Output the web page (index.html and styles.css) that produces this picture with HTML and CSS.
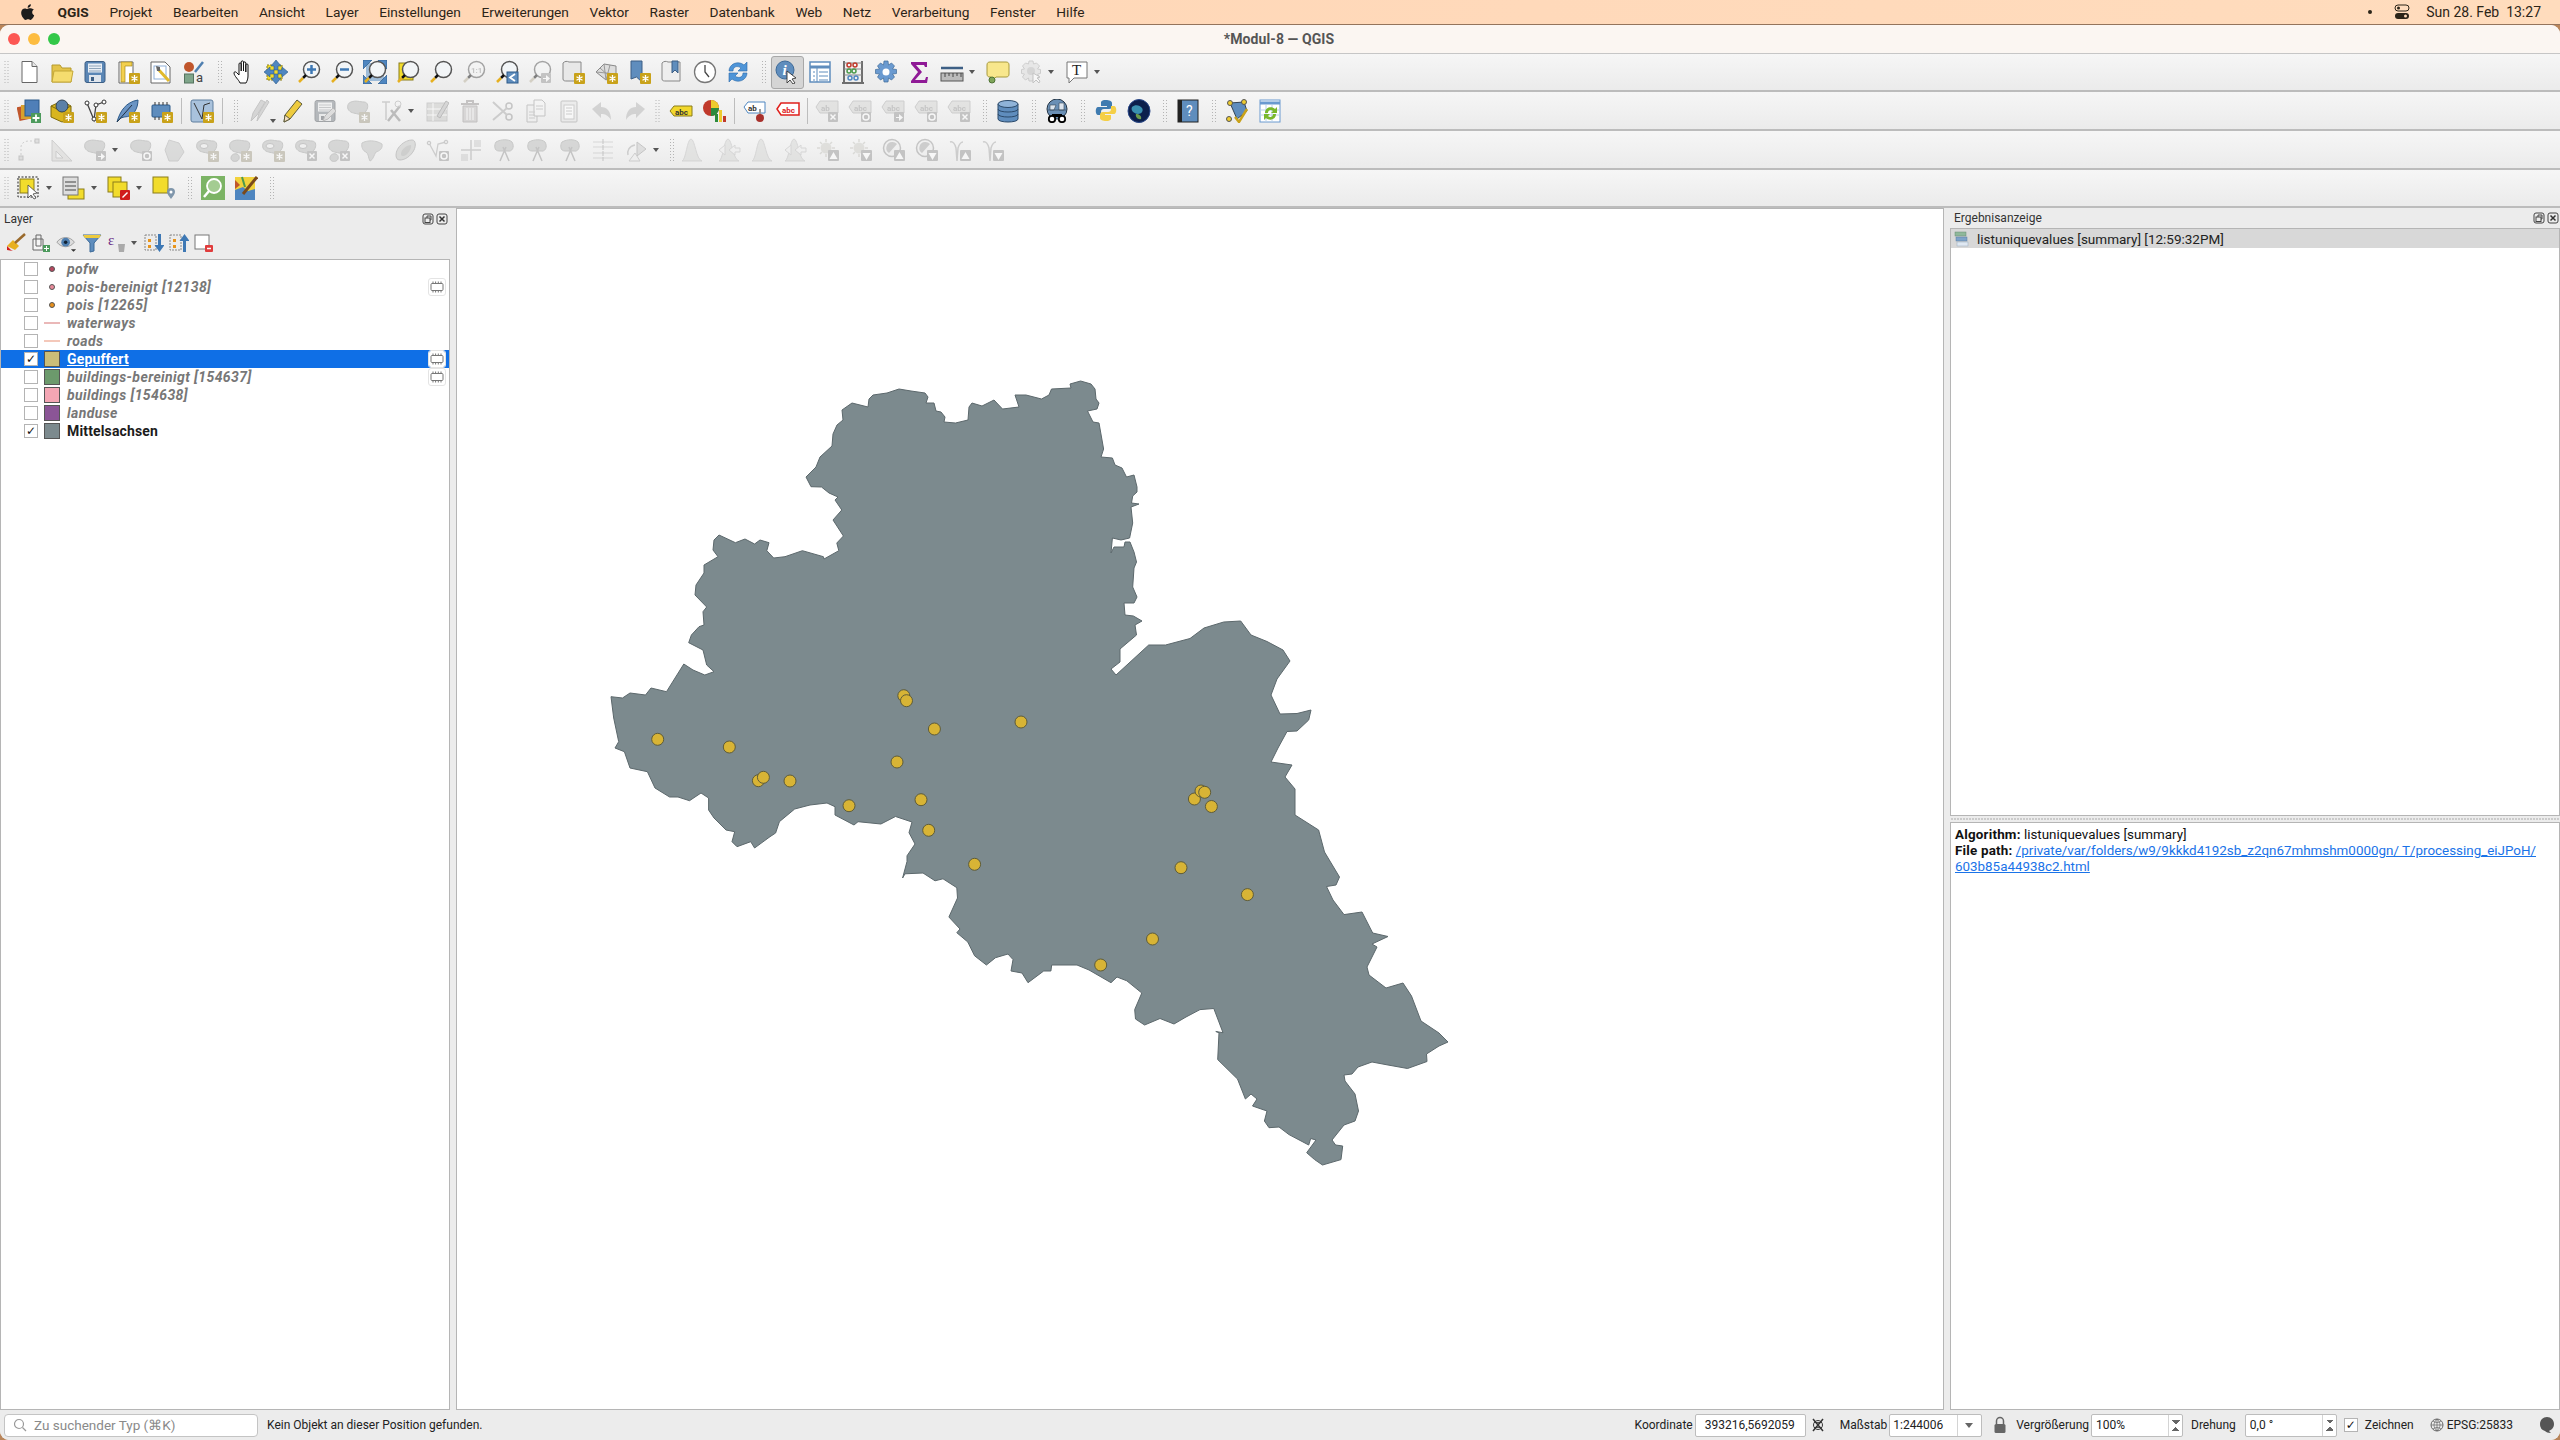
FILE: index.html
```html
<!DOCTYPE html>
<html lang="de">
<head>
  <meta charset="UTF-8" />
  <title>*Modul-8 — QGIS</title>
  <link rel="stylesheet" href="styles.css">
</head>
<body>

  <!-- shared icons -->
  <svg class="defs">
    <symbol id="star" viewBox="0 0 24 24"><rect x="13" y="13" width="11" height="11" rx="1" fill="#c9a21a"/><path d="M18.5 15v7M15.5 16.8l6 3.5M21.5 16.8l-6 3.5" stroke="#fff" stroke-width="1.3"/></symbol>
    <symbol id="xbadge" viewBox="0 0 24 24"><rect x="13" y="13" width="10" height="10" rx="1" fill="#999"/><path d="M15.5 15.5l5 5M20.5 15.5l-5 5" stroke="#fff" stroke-width="1.5"/></symbol>
    <symbol id="arrbadge" viewBox="0 0 24 24"><rect x="13" y="13" width="10" height="10" rx="1" fill="#999"/><path d="M15 18h3v-3l4 3.5-4 3.5v-3h-3z" fill="#fff"/></symbol>
    <symbol id="bluearr" viewBox="0 0 24 24"><rect x="12" y="12" width="11" height="11" fill="#5f8dbd" stroke="#2c5a8a"/><path d="M20 14l-5 3.5 5 3.5" fill="none" stroke="#fff" stroke-width="1.8"/></symbol>
    <symbol id="rotbadge" viewBox="0 0 24 24"><rect x="13" y="13" width="10" height="10" rx="1" fill="#999"/><circle cx="18" cy="18" r="3" fill="none" stroke="#fff" stroke-width="1.5"/></symbol>
    <symbol id="upbadge" viewBox="0 0 24 24"><rect x="12" y="12" width="11" height="11" rx="1" fill="#999"/><path d="M17.5 14l4 7h-8z" fill="#fff"/></symbol>
    <symbol id="downbadge" viewBox="0 0 24 24"><rect x="12" y="12" width="11" height="11" rx="1" fill="#999"/><path d="M13.5 15h8l-4 7z" fill="#fff"/></symbol>
    <symbol id="doc" viewBox="0 0 24 24"><path d="M5 1.5h10l5 5v16H5z" fill="#fff" stroke="#666"/><path d="M15 1.5v5h5" fill="#e8e8e8" stroke="#666"/></symbol>
    <symbol id="folder" viewBox="0 0 24 24"><path d="M2 5h8l2 3h9v14H2z" fill="#e4c44a" stroke="#b59a2c"/><path d="M2 22l2-11h19l-2 11z" fill="#f5dc6e" stroke="#c4a838"/></symbol>
    <symbol id="floppy" viewBox="0 0 24 24"><rect x="2" y="1.5" width="20" height="21" rx="2" fill="#5a86b5" stroke="#3d5f85"/><rect x="5" y="3.5" width="14" height="9" fill="#e8eef5"/><path d="M6 6h12M6 8.5h12M6 11h12" stroke="#8ea4ba"/><rect x="6" y="15" width="12" height="7" fill="#dfe5ec"/><rect x="8" y="17" width="3" height="4" fill="#3d5f85"/></symbol>
    <symbol id="layout" viewBox="0 0 24 24"><path d="M3 2h14v21H3z" fill="#fff" stroke="#666"/><path d="M5 2h11v4H9v16H5z" fill="#f3d04e" stroke="#a8891c" stroke-width=".7"/></symbol>
    <symbol id="wrenchdoc" viewBox="0 0 24 24"><path d="M2 2h14l5 5v16H2z" fill="#fff" stroke="#666"/><rect x="5" y="6" width="12" height="13" fill="none" stroke="#8fb0d8"/><path d="M9 9l11 12" stroke="#e0b92c" stroke-width="3"/><path d="M7 6l4 1 0 4-3 0z" fill="#666"/></symbol>
    <symbol id="style" viewBox="0 0 24 24"><circle cx="7" cy="7" r="5" fill="#c0562c"/><path d="M13 12L21 2" stroke="#4f7fb0" stroke-width="2.5"/><rect x="2.5" y="14" width="9" height="9" fill="#7fa58a" stroke="#55735f"/></symbol>
    <symbol id="hand" viewBox="0 0 24 24"><path d="M9 23c-1-3-6-7-6-10 0-1.500 1.500-1.500 2.500-.5L8 15V4c0-1.500 2.200-1.500 2.200 0v7-9c0-1.500 2.300-1.500 2.300 0v9V3c0-1.500 2.300-1.500 2.300 0v9-7c0-1.500 2.200-1.500 2.200 0v11c0 3-1 5-2 7z" fill="#fff" stroke="#111"/></symbol>
    <symbol id="pan" viewBox="0 0 24 24"><rect x="3" y="5" width="15" height="15" fill="#f2dc2c" stroke="#8a7d1a" stroke-dasharray="2 1"/><path d="M12 0l5 6h-3v4h-4V6H7zM12 24l5-6h-3v-4h-4v4H7zM0 12l6-5v3h4v4H6v3zM24 12l-6-5v3h-4v4h4v3z" fill="#4f86c0" stroke="#2c5a8a" stroke-width=".6"/></symbol>
    <symbol id="mag" viewBox="0 0 24 24"><circle cx="14.5" cy="9.5" r="8" fill="#f2f5f7" stroke="#555" stroke-width="1.5"/><path d="M9 15l-3 3" stroke="#111" stroke-width="2.5"/><path d="M6 18l-4 4" stroke="#e6b020" stroke-width="2.5"/></symbol>
    <symbol id="plus" viewBox="0 0 24 24"><path d="M14.5 5v9M10 9.500h9" stroke="#3e78b4" stroke-width="2.5"/></symbol>
    <symbol id="minus" viewBox="0 0 24 24"><path d="M10 9.500h9" stroke="#3e78b4" stroke-width="2.5"/></symbol>
    <symbol id="fullarrows" viewBox="0 0 24 24"><rect x="3" y="3" width="18" height="18" fill="#9dbbd8"/><path d="M0 0h9L0 9zM24 0h-9l9 9zM24 24h-9l9-9zM0 24h9l-9-9z" fill="#4f86c0" stroke="#2c5a8a" stroke-width=".7"/></symbol>
    <symbol id="yellowsq" viewBox="0 0 24 24"><rect x="3" y="3" width="14" height="17" fill="#f2dc2c" stroke="#8a7d1a"/></symbol>
    <symbol id="mapdoc" viewBox="0 0 24 24"><path d="M2 3c2-2 4-2 6-1h12v19H6c-2 0-4 0-4-2z" fill="#e8e8e8" stroke="#888"/></symbol>
    <symbol id="grid3d" viewBox="0 0 24 24"><path d="M2 12l8-8 12 2 0 8-10 6z" fill="#ddd" stroke="#888"/><path d="M6 8l10 9M10 4l2 16M16 5l-4 15M2 12l20 2" stroke="#999" fill="none"/></symbol>
    <symbol id="bookmark" viewBox="0 0 24 24"><path d="M4 1h11v21l-5.500-5L4 19z" fill="#5f8dbd" stroke="#3d5f85"/></symbol>
    <symbol id="bookmarks" viewBox="0 0 24 24"><path d="M2 3c2-2 4-2 6-1h12v19H6c-2 0-4 0-4-2z" fill="#eee" stroke="#888"/><path d="M12 1h6v12l-3-3-3 3z" fill="#5f8dbd" stroke="#3d5f85"/></symbol>
    <symbol id="clock" viewBox="0 0 24 24"><circle cx="12" cy="12" r="10.5" fill="#fff" stroke="#777" stroke-width="1.3"/><path d="M12 5v7l4 5" fill="none" stroke="#444" stroke-width="1.3"/></symbol>
    <symbol id="refresh" viewBox="0 0 24 24"><path d="M3 11C3 4 12 0 18 5l3-3v9h-9l3-3C11 5 7 7 7 11zM21 13c0 7-9 11-15 6l-3 3v-9h9l-3 3c4 3 8 1 8-3z" fill="#4f95d8" stroke="#2c6aa8" stroke-width=".6"/></symbol>
    <symbol id="identify" viewBox="0 0 24 24"><circle cx="10" cy="10" r="9" fill="#5f8dbd" stroke="#3d6a98"/></symbol>
    <symbol id="cursor" viewBox="0 0 24 24"><path d="M12 11v12l3-3 3 4 2-1-3-4 4-1z" fill="#fff" stroke="#333" stroke-width=".9"/></symbol>
    <symbol id="table" viewBox="0 0 24 24"><rect x="2" y="2" width="20" height="20" fill="#fff" stroke="#5f8dbd" stroke-width="1.5"/><path d="M2 7h20" stroke="#5f8dbd" stroke-width="3"/><path d="M9 8v14M5 12h2M5 16h2M5 20h2M11 12h9M11 16h9M11 20h9" stroke="#5f8dbd"/></symbol>
    <symbol id="abacus" viewBox="0 0 24 24"><path d="M3 1v21M21 1v21M1 23h22" stroke="#444" stroke-width="1.5"/><path d="M3 3h18M3 9h18M3 15h18" stroke="#888"/><g fill="none" stroke-width="1.5"><circle cx="8" cy="5" r="2" stroke="#c0392b"/><circle cx="14" cy="5" r="2" stroke="#c0392b"/><circle cx="8" cy="11" r="2" stroke="#4c9a4c"/><circle cx="13" cy="11" r="2" stroke="#4c9a4c"/><circle cx="9" cy="18" r="2" stroke="#4f86c0"/><circle cx="15" cy="18" r="2" stroke="#4f86c0"/></g></symbol>
    <symbol id="gear" viewBox="0 0 24 24"><path d="M10 1h4l.5 4 3-2 3 3-2 3 4 .5v4l-4 .5 2 3-3 3-3-2-.5 4h-4l-.5-4-3 2-3-3 2-3-4-.5v-4l4-.5-2-3 3-3 3 2z" fill="#6a9ad0" stroke="#3d6a98" stroke-width=".7"/><circle cx="12" cy="12" r="3.5" fill="#fff"/></symbol>
    <symbol id="sigma" viewBox="0 0 24 24"><path d="M4 2h16v5h-2l-1-2H9l6 7-7 8h10l1-3h2l-1 6H4v-2l7-9-7-8z" fill="#8f1a96"/></symbol>
    <symbol id="ruler" viewBox="0 0 24 24"><path d="M1 8h22" stroke="#3d5f85" stroke-width="2.5"/><rect x="1" y="13" width="22" height="8" fill="#bbb" stroke="#555"/><path d="M5 13v4M9 13v3M13 13v4M17 13v3M21 13v4" stroke="#444"/></symbol>
    <symbol id="balloon" viewBox="0 0 24 24"><path d="M4 2h16c2 0 3 1 3 3v9c0 2-1 3-3 3H10l-5 5 0-5H4c-2 0-3-1-3-3V5c0-2 1-3 3-3z" fill="#f8e78c" stroke="#a89a3c"/><circle cx="6" cy="20" r="3" fill="#7fa55a" stroke="#4f7335"/></symbol>
    <symbol id="action" viewBox="0 0 24 24"><path d="M10 1h4l.5 3 3-1 3 3-2 3 3 .5v4l-3 .5 2 3-3 3-3-2-.5 3h-4l-.5-3-3 2-3-3 2-3-3-.5v-4l3-.5-2-3 3-3 3 1z" fill="#ddd" stroke="#aaa"/><circle cx="12" cy="11" r="4" fill="#bbb"/><path d="M14 13v10l3-3 3 3 1-2-3-3 3-1z" fill="#fff" stroke="#999"/></symbol>
    <symbol id="tbox" viewBox="0 0 24 24"><path d="M2 2h20v16H9l-5 5v-5H2z" fill="#fff" stroke="#777"/></symbol>
    <symbol id="addlayer" viewBox="0 0 24 24"><rect x="1" y="7" width="12" height="14" fill="#c0562c" transform="rotate(-12 7 14)"/><rect x="4" y="6" width="13" height="14" fill="#d9a02c"/><rect x="8" y="1" width="14" height="16" fill="#4f7fb8" stroke="#2c5a8a"/><rect x="14" y="14" width="10" height="10" fill="#4c9a5c"/><path d="M19 15.5v7M15.5 19h7" stroke="#fff" stroke-width="1.8"/></symbol>
    <symbol id="gpkg" viewBox="0 0 24 24"><path d="M1 7l11-5 9 5v13l-9 3-11-5z" fill="#d9b51e" stroke="#7d6a0c"/><path d="M1 7l10 5 10-5" fill="none" stroke="#7d6a0c"/><circle cx="12" cy="7" r="6" fill="#5b80a8" stroke="#345"/></symbol>
    <symbol id="vnode" viewBox="0 0 24 24"><path d="M4 4l7 17L13 6 21 3" fill="none" stroke="#444" stroke-width="1.3"/><g fill="#fff" stroke="#333"><circle cx="4" cy="4" r="2"/><circle cx="11" cy="20" r="2"/><circle cx="13" cy="6" r="2"/><circle cx="21" cy="3" r="2"/></g></symbol>
    <symbol id="feather" viewBox="0 0 24 24"><path d="M1 23C4 12 10 3 22 1c0 8-4 17-14 17l-3 1z" fill="#6a94c4" stroke="#2c5a8a"/><path d="M1 23L16 6" stroke="#234"/></symbol>
    <symbol id="chip" viewBox="0 0 24 24"><rect x="3" y="6" width="18" height="12" rx="1" fill="#5f8dbd" stroke="#2c5a8a"/><path d="M6 3v3M10 3v3M14 3v3M18 3v3M6 18v3M10 18v3M14 18v3M18 18v3" stroke="#333"/></symbol>
    <symbol id="vbox" viewBox="0 0 24 24"><rect x="1" y="1" width="22" height="22" rx="2" fill="#a9c2dc" stroke="#5f7f9f"/><path d="M4 4l8 16 2-14 6-2" fill="none" stroke="#333"/></symbol>
    <symbol id="pencils" viewBox="0 0 24 24"><path d="M4 22l2-8 8-13 4 2-8 13zM10 22l2-8 8-13 2 2-8 13z" fill="#bbb" stroke="#999"/></symbol>
    <symbol id="pencil" viewBox="0 0 24 24"><path d="M4 23l1-7L17 1l5 4L10 20z" fill="#eecb3e" stroke="#5d5a3a"/><path d="M4 23l1-7 5 4z" fill="#f3dfc0" stroke="#5d5a3a"/></symbol>
    <symbol id="floppyedit" viewBox="0 0 24 24"><use href="#floppy"/><path d="M10 22l2-5 8-8 3 3-8 8z" fill="#ccc" stroke="#888"/></symbol>
    <symbol id="blob" viewBox="0 0 24 24"><path d="M5 3c5-2 9 0 13 0s5 5 2 9c-2 3-4 4-8 3-4-1-8-1-10-5-1-3 0-6 3-7z" fill="#b8bdb8" stroke="#9a9f9a"/></symbol>
    <symbol id="tools" viewBox="0 0 24 24"><path d="M3 3h8M7 3v18" stroke="#aaa" stroke-width="1.5"/><path d="M9 22l12-15M21 22L12 11" stroke="#8a8a8a" stroke-width="2.5"/><circle cx="19" cy="5" r="3" fill="none" stroke="#aaa"/></symbol>
    <symbol id="tabedit" viewBox="0 0 24 24"><rect x="2" y="4" width="20" height="18" fill="#ccc8b8" stroke="#aaa"/><path d="M2 10h20M2 16h20M8 4v18" stroke="#fff"/><path d="M12 17l9-15 3 2-9 15z" fill="#bbb" stroke="#888"/></symbol>
    <symbol id="trash" viewBox="0 0 24 24"><path d="M3 5h18M9 5V2h6v3" stroke="#a89090" stroke-width="2" fill="none"/><path d="M5 7h14v16H5z" fill="#cbb" stroke="#a89090"/><path d="M9 9v12M12 9v12M15 9v12" stroke="#fff"/></symbol>
    <symbol id="scissors" viewBox="0 0 24 24"><circle cx="18" cy="7" r="3" fill="none" stroke="#999" stroke-width="1.5"/><circle cx="18" cy="18" r="3" fill="none" stroke="#999" stroke-width="1.5"/><path d="M2 3l14 13M2 21L16 9" stroke="#aaa" stroke-width="2"/></symbol>
    <symbol id="copy" viewBox="0 0 24 24"><path d="M3 6h10v17H3z" fill="#eee" stroke="#999"/><path d="M10 1h8l3 3v13H10z" fill="#f5f5f5" stroke="#999"/><path d="M12 7h7M12 10h7M5 13h6M5 16h6M5 19h6" stroke="#aaa"/></symbol>
    <symbol id="paste" viewBox="0 0 24 24"><rect x="4" y="2" width="16" height="21" rx="1" fill="#e6e6e6" stroke="#999"/><rect x="7" y="6" width="10" height="14" fill="#fff" stroke="#aaa"/><path d="M9 9h6M9 12h6M9 15h6" stroke="#aaa"/></symbol>
    <symbol id="undo" viewBox="0 0 24 24"><path d="M2 10l9-7v5c6 0 10 4 10 13-3-5-6-6-10-6v4z" fill="#b5b5b5"/></symbol>
    <symbol id="redo" viewBox="0 0 24 24"><path d="M22 10l-9-7v5C7 8 3 12 3 21c3-5 6-6 10-6v4z" fill="#b5b5b5"/></symbol>
    <symbol id="abc" viewBox="0 0 24 24"><path d="M1 12l4-5h18v10H5z" fill="#f2d82c" stroke="#8a7d1a"/></symbol>
    <symbol id="pie" viewBox="0 0 24 24"><circle cx="9" cy="9" r="8" fill="#c0392b"/><path d="M9 9V1a8 8 0 0 1 8 8z" fill="#eecb2e"/><path d="M9 9h8a8 8 0 0 1-8 8z" fill="#2c8a3c"/><rect x="13" y="15" width="3" height="8" fill="#2c8a3c"/><rect x="17" y="11" width="3" height="12" fill="#eecb2e"/><rect x="21" y="17" width="3" height="6" fill="#c0392b"/></symbol>
    <symbol id="abpin" viewBox="0 0 24 24"><path d="M1 8l4-5h17v11H5z" fill="#fff" stroke="#4f86c0"/></symbol>
    <symbol id="pin" viewBox="0 0 24 24"><path d="M17 10v6" stroke="#999" stroke-width="2"/><circle cx="17" cy="19" r="4" fill="#a8312c"/></symbol>
    <symbol id="abcred" viewBox="0 0 24 24"><path d="M1 10l4-6h18v12H5z" fill="#fff" stroke="#e0201c" stroke-width="1.5"/></symbol>
    <symbol id="abcgray" viewBox="0 0 24 24"><path d="M1 8l4-6h18v12H5z" fill="#d8d4c6" stroke="#aaa"/></symbol>
    <symbol id="db" viewBox="0 0 24 24"><path d="M2 5v15c0 4 20 4 20 0V5" fill="#5f8dbd" stroke="#2c4a6a"/><ellipse cx="12" cy="5" rx="10" ry="3.5" fill="#8fb3d8" stroke="#2c4a6a"/><path d="M2 10c0 4 20 4 20 0M2 15c0 4 20 4 20 0" fill="none" stroke="#2c4a6a"/></symbol>
    <symbol id="globebin" viewBox="0 0 24 24"><circle cx="12" cy="10" r="10" fill="#6a8fb5" stroke="#234"/><path d="M5 6h6l-2 5-4 0zM14 4h5v7h-5zM3 11h18" fill="#dde5ee" stroke="#345" stroke-width=".6"/><path d="M7 15h10v3H7z"/><circle cx="7" cy="20" r="3.2" fill="#fff" stroke="#000" stroke-width="1.8"/><circle cx="17" cy="20" r="3.2" fill="#fff" stroke="#000" stroke-width="1.8"/></symbol>
    <symbol id="python" viewBox="0 0 24 24"><path d="M12 1c-5 0-5 2-5 3v3h6v1H4c-3 0-3 8 0 8h3v-3c0-2 1-3 3-3h5c2 0 3-1 3-3V4c0-2-3-3-6-3z" fill="#3f7bb0"/><path d="M12 22c5 0 5-2 5-3v-3h-6v-1h9c3 0 3-8 0-8h-3v3c0 2-1 3-3 3H9c-2 0-3 1-3 3v3c0 2 3 3 6 3z" fill="#f5cf46"/></symbol>
    <symbol id="earth" viewBox="0 0 24 24"><ellipse cx="12" cy="12" rx="11" ry="11.5" fill="#0c1f4c" stroke="#2c4a8a"/><path d="M5 8c3-3 8-2 10 1s-1 6-4 6-8-3-6-7z" fill="#3a8fb0"/><path d="M9 15c3 0 6 2 5 5-3 1-6-2-5-5z" fill="#6a9a4c"/></symbol>
    <symbol id="helpbook" viewBox="0 0 24 24"><rect x="2" y="1" width="20" height="22" fill="#5f8dbd" stroke="#222"/><rect x="2" y="1" width="4" height="22" fill="#222"/></symbol>
    <symbol id="topo" viewBox="0 0 24 24"><path d="M5 4l14-1 3 9-10 8z" fill="#5f8dbd" stroke="#345"/><g fill="#eecb2e" stroke="#555"><circle cx="5" cy="4" r="2.5"/><circle cx="19" cy="3" r="2.5"/><circle cx="4" cy="20" r="2.5"/></g><path d="M10 18l4 5 8-13" fill="none" stroke="#c9a21a" stroke-width="2.5"/></symbol>
    <symbol id="tablerefresh" viewBox="0 0 24 24"><rect x="2" y="1" width="20" height="22" fill="#fff" stroke="#6a9ad0"/><path d="M2 4h20" stroke="#6a9ad0" stroke-width="3"/><path d="M8 6v17M14 6v17M2 11h20M2 16h20" stroke="#b8d0e8"/><path d="M7 14c0-6 7-7 10-4l2-2v6h-6l2-2c-2-2-5-1-5 2zM18 15c0 6-7 7-10 4l-2 2v-6h6l-2 2c2 2 5 1 5-2z" fill="#7ab82c"/></symbol>
    <symbol id="dotted" viewBox="0 0 24 24"><path d="M4 21V9c0-4 4-6 8-6h9" fill="none" stroke="#aaa" stroke-dasharray="2 2"/><rect x="2" y="18" width="4" height="4" fill="#ccc" stroke="#999"/><rect x="18" y="1" width="4" height="4" fill="#ccc" stroke="#999"/></symbol>
    <symbol id="triruler" viewBox="0 0 24 24"><path d="M2 2l20 21H2z" fill="#ddd6c8" stroke="#aaa"/><path d="M6 13l7 7H6z" fill="#eee" stroke="#aaa"/></symbol>
    <symbol id="ring" viewBox="0 0 24 24"><use href="#blob"/><ellipse cx="9" cy="8" rx="4" ry="2.5" fill="#eee" stroke="#999"/></symbol>
    <symbol id="two" viewBox="0 0 24 24"><use href="#blob"/><path d="M3 20c0-3 3-5 6-4s3 6 0 7-6 0-6-3z" fill="#b8bdb8" stroke="#9a9f9a"/></symbol>
    <symbol id="hex" viewBox="0 0 24 24"><path d="M7 2l10 3 5 9-6 9H7L3 12z" fill="#c4c8c4" stroke="#aaa"/></symbol>
    <symbol id="reshape" viewBox="0 0 24 24"><path d="M2 5c5-3 14-3 20 1 1 5-3 7-6 8-2 3-3 8-6 9-2-3-1-7-4-9-3-1-5-5-4-9z" fill="#bdc2bb" stroke="#a0a5a0"/></symbol>
    <symbol id="offset" viewBox="0 0 24 24"><path d="M3 17C3 9 12 2 19 2c4 0 4 6 2 10-3 6-9 10-14 10-3 0-4-2-4-5z" fill="#c4c8bc" stroke="#999"/><path d="M8 16c0-5 6-9 10-9 1 3-3 10-7 11-2 0-3 0-3-2z" fill="#aab0a4"/></symbol>
    <symbol id="noderot" viewBox="0 0 24 24"><path d="M3 5l7 13L12 6 20 4" fill="none" stroke="#aaa" stroke-width="1.3"/><circle cx="3" cy="5" r="1.8" fill="#ddd" stroke="#999"/><circle cx="20" cy="4" r="1.8" fill="#ddd" stroke="#999"/></symbol>
    <symbol id="splitx" viewBox="0 0 24 24"><path d="M2 12h20M12 2v20" stroke="#aaa" stroke-width="1.5"/><rect x="15" y="2" width="7" height="7" fill="#ccc"/><rect x="2" y="16" width="7" height="7" fill="#ccc"/></symbol>
    <symbol id="scblob" viewBox="0 0 24 24"><path d="M4 4c5-3 13-3 16 0 3 5 0 10-4 9-3 0-6 0-9 0-5 0-5-6-3-9z" fill="#b8bdb8" stroke="#9a9f9a"/><path d="M8 23l6-14M17 23L11 9" stroke="#999" stroke-width="1.5"/></symbol>
    <symbol id="lines" viewBox="0 0 24 24"><path d="M2 4h20M2 9h20M2 15h20M2 20h20" stroke="#bbb"/><path d="M12 1v5M12 7v5M12 13v5M12 19v4" stroke="#999"/></symbol>
    <symbol id="triarrow" viewBox="0 0 24 24"><path d="M13 4l9 7-9 7z" fill="#ccc" stroke="#999"/><path d="M11 7c-6 1-8 6-7 10" fill="none" stroke="#aaa" stroke-width="1.5"/><path d="M5 23l6-8 5 8z" fill="#eee" stroke="#aaa"/></symbol>
    <symbol id="hist" viewBox="0 0 24 24"><path d="M2 23C6 22 7 1 11 1s5 21 11 22z" fill="#d4d8cc" stroke="#bbb"/></symbol>
    <symbol id="histarrow" viewBox="0 0 24 24"><use href="#hist"/><path d="M12 12l6-5v3h5v4h-5v3zM2 12l6-5v10z" fill="#eee" stroke="#bbb"/></symbol>
    <symbol id="sun" viewBox="0 0 24 24"><circle cx="10" cy="10" r="5.5" fill="#d2cfa8"/><path d="M10 1v3M10 16v3M1 10h3M16 10h3M4 4l2 2M14 14l2 2M16 4l-2 2M4 16l2-2" stroke="#c8c6a0" stroke-width="1.5"/></symbol>
    <symbol id="contrast" viewBox="0 0 24 24"><circle cx="10" cy="10" r="8.5" fill="#eee" stroke="#999" stroke-width="1.5"/><path d="M10 4a6 6 0 0 0-3 11l8-9a6 6 0 0 0-5-2z" fill="#aaa"/></symbol>
    <symbol id="gamma" viewBox="0 0 24 24"><path d="M2 4c3-1 5 2 6 6l1 13 1-13c1-3 2-6 5-6" fill="none" stroke="#aaa" stroke-width="1.5"/></symbol>
    <symbol id="selrect" viewBox="0 0 24 24"><rect x="1" y="1" width="20" height="20" fill="none" stroke="#222" stroke-dasharray="2 1.5"/><rect x="3" y="3" width="14" height="14" fill="#f2dc2c" stroke="#8a7d1a"/><path d="M11 9v13l3-3 3 4 2-1-3-4 4-1z" fill="#fff" stroke="#444" stroke-width=".8"/></symbol>
    <symbol id="seltable" viewBox="0 0 24 24"><rect x="6" y="13" width="16" height="10" fill="#f2dc2c" stroke="#8a7d1a"/><rect x="1" y="1" width="15" height="18" fill="#ddd" stroke="#777"/><path d="M3 6h11M3 10h11M3 14h11" stroke="#777" stroke-width="1.5"/></symbol>
    <symbol id="desel" viewBox="0 0 24 24"><rect x="1" y="1" width="13" height="15" fill="#f2dc2c" stroke="#8a7d1a"/><rect x="6" y="6" width="14" height="15" fill="#f2dc2c" stroke="#8a7d1a"/><rect x="13" y="14" width="10" height="10" rx="1" fill="#d01c1c"/><path d="M15.5 21.5l5-5" stroke="#fff" stroke-width="1.5"/></symbol>
    <symbol id="selloc" viewBox="0 0 24 24"><rect x="1" y="1" width="15" height="16" fill="#f2dc2c" stroke="#8a7d1a"/><path d="M19 23c-2-3-4-5-4-7a4 4 0 0 1 8 0c0 2-2 4-4 7z" fill="#7f96ab"/><circle cx="19" cy="16" r="1.5" fill="#fff"/></symbol>
    <symbol id="greenmag" viewBox="0 0 24 24"><rect width="24" height="24" fill="#7cb465"/><circle cx="13" cy="10" r="7" fill="#a4cc92" stroke="#fff" stroke-width="1.8"/><path d="M8 15l-5 6" stroke="#fff" stroke-width="2.5"/></symbol>
    <symbol id="mapedit" viewBox="0 0 24 24"><rect x="1" y="1" width="20" height="23" fill="#f2d23c"/><path d="M1 14l8-3 5 4 7-2v11H1z" fill="#4f86c0"/><path d="M1 4l5 5-5 4z" fill="#c0562c"/><path d="M8 1l3 10" stroke="#4c9a4c" stroke-width="2"/><path d="M9 18L23 1" stroke="#7a4a1c" stroke-width="3"/></symbol>
    <symbol id="float" viewBox="0 0 12 12"><rect x="1" y="1" width="10" height="10" rx="2" fill="none" stroke="#444"/><rect x="3" y="5" width="5" height="4.5" fill="none" stroke="#444"/><path d="M5 5V3h4v4H8" fill="none" stroke="#444"/></symbol>
    <symbol id="close" viewBox="0 0 12 12"><rect x="1" y="1" width="10" height="10" rx="2" fill="none" stroke="#444"/><path d="M3.5 3.500l5 5M8.500 3.500l-5 5" stroke="#333" stroke-width="1.5"/></symbol>
    <symbol id="memchip" viewBox="0 0 16 16"><rect x="2" y="4.500" width="12" height="7" rx="1" fill="#fff" stroke="#777"/><path d="M4 2.500v2M6.600 2.500v2M9.300 2.500v2M12 2.500v2M4 11.500v2M6.600 11.500v2M9.300 11.500v2M12 11.500v2" stroke="#777"/></symbol>
  </svg>

  <!-- macOS menu -->
  <nav class="menubar">
    <svg class="apple" viewBox="0 0 16 18"><path d="M11.300 0c.1 1.200-.4 2.200-1 2.900-.7.800-1.700 1.300-2.700 1.200-.1-1.100.4-2.200 1-2.900C9.300.5 10.400 0 11.300 0zM14.800 6.100c-1.500.9-2 2-2 3.200 0 1.500.8 2.700 2.300 3.300-.4 1.300-1 2.500-1.800 3.600-.7 1-1.400 1.800-2.500 1.800s-1.400-.7-2.700-.7c-1.300 0-1.700.7-2.700.7-1.100 0-1.900-.9-2.600-2C1 14.300.2 12 .2 9.900c0-3.300 2.100-5 4.200-5 1.100 0 2 .7 2.700.7.700 0 1.700-.8 3-.8 1.100 0 3.200.4 4.700 1.300z" fill="#1d1d1d"/></svg>
    <span class="menu-item menu-app">QGIS</span>
    <span class="menu-item">Projekt</span>
    <span class="menu-item">Bearbeiten</span>
    <span class="menu-item">Ansicht</span>
    <span class="menu-item">Layer</span>
    <span class="menu-item">Einstellungen</span>
    <span class="menu-item">Erweiterungen</span>
    <span class="menu-item">Vektor</span>
    <span class="menu-item">Raster</span>
    <span class="menu-item">Datenbank</span>
    <span class="menu-item">Web</span>
    <span class="menu-item">Netz</span>
    <span class="menu-item">Verarbeitung</span>
    <span class="menu-item">Fenster</span>
    <span class="menu-item">Hilfe</span>
    <div class="menu-right">
      <span class="menu-dot"></span>
      <svg class="switches" viewBox="0 0 16 16"><rect x="1" y="1" width="14" height="6" rx="3" fill="none" stroke="#2b2418"/><circle cx="4.5" cy="4" r="1.5" fill="#2b2418"/><rect x="1" y="9" width="14" height="6" rx="3" fill="#2b2418"/><circle cx="11.5" cy="12" r="1.5" fill="#ffd9b9"/></svg>
      <span class="menu-clock">Sun 28. Feb&nbsp; 13:27</span>
    </div>
  </nav>

  <div class="window">
    <header class="titlebar">
      <div class="lights">
        <span class="light light-red"></span>
        <span class="light light-yellow"></span>
        <span class="light light-green"></span>
      </div>
      <span class="title">*Modul-8 — QGIS</span>
    </header>

    <!-- toolbars -->
    <div class="tbar tbar-short">
      <i class="grip grip-first"></i>
      <span class="tb"><svg class="ic"><use href="#doc"/></svg></span>
      <span class="tb"><svg class="ic"><use href="#folder"/></svg></span>
      <span class="tb"><svg class="ic"><use href="#floppy"/></svg></span>
      <span class="tb"><svg class="ic"><use href="#layout"/><use href="#star"/></svg></span>
      <span class="tb"><svg class="ic"><use href="#wrenchdoc"/></svg></span>
      <span class="tb"><svg class="ic" viewBox="0 0 24 24"><use href="#style"/><text x="14" y="22" class="ic-txt">a</text></svg></span>
      <i class="grip"></i>
      <span class="tb"><svg class="ic"><use href="#hand"/></svg></span>
      <span class="tb"><svg class="ic"><use href="#pan"/></svg></span>
      <span class="tb"><svg class="ic"><use href="#mag"/><use href="#plus"/></svg></span>
      <span class="tb"><svg class="ic"><use href="#mag"/><use href="#minus"/></svg></span>
      <span class="tb"><svg class="ic"><use href="#fullarrows"/><use href="#mag"/></svg></span>
      <span class="tb"><svg class="ic"><use href="#yellowsq"/><use href="#mag"/></svg></span>
      <span class="tb"><svg class="ic"><use href="#mag"/></svg></span>
      <span class="tb off"><svg class="ic" viewBox="0 0 24 24"><use href="#mag"/><text x="9" y="13" class="ic-abc ic-gray">1:1</text></svg></span>
      <span class="tb"><svg class="ic"><use href="#mag"/><use href="#bluearr"/></svg></span>
      <span class="tb off"><svg class="ic"><use href="#mag"/><use href="#arrbadge"/></svg></span>
      <span class="tb"><svg class="ic"><use href="#mapdoc"/><use href="#star"/></svg></span>
      <span class="tb"><svg class="ic"><use href="#grid3d"/><use href="#star"/></svg></span>
      <span class="tb"><svg class="ic"><use href="#bookmark"/><use href="#star"/></svg></span>
      <span class="tb"><svg class="ic"><use href="#bookmarks"/></svg></span>
      <span class="tb"><svg class="ic"><use href="#clock"/></svg></span>
      <span class="tb"><svg class="ic"><use href="#refresh"/></svg></span>
      <i class="grip"></i>
      <span class="tb tb-active"><svg class="ic" viewBox="0 0 24 24"><use href="#identify"/><text x="7.5" y="15" class="ic-i">i</text><use href="#cursor"/></svg></span>
      <span class="tb"><svg class="ic"><use href="#table"/></svg></span>
      <span class="tb"><svg class="ic"><use href="#abacus"/></svg></span>
      <span class="tb"><svg class="ic"><use href="#gear"/></svg></span>
      <span class="tb"><svg class="ic"><use href="#sigma"/></svg></span>
      <span class="tb"><svg class="ic"><use href="#ruler"/></svg></span><i class="drop"></i>
      <span class="tb"><svg class="ic"><use href="#balloon"/></svg></span>
      <span class="tb off"><svg class="ic"><use href="#action"/></svg></span><i class="drop"></i>
      <span class="tb"><svg class="ic" viewBox="0 0 24 24"><use href="#tbox"/><text x="7" y="15" class="ic-t">T</text></svg></span><i class="drop"></i>
    </div>

    <div class="tbar">
      <i class="grip grip-first"></i>
      <span class="tb"><svg class="ic"><use href="#addlayer"/></svg></span>
      <span class="tb"><svg class="ic"><use href="#gpkg"/><use href="#star"/></svg></span>
      <span class="tb"><svg class="ic"><use href="#vnode"/><use href="#star"/></svg></span>
      <span class="tb"><svg class="ic"><use href="#feather"/><use href="#star"/></svg></span>
      <span class="tb"><svg class="ic"><use href="#chip"/><use href="#star"/></svg></span>
      <i class="sep"></i>
      <span class="tb"><svg class="ic"><use href="#vbox"/><use href="#star"/></svg></span>
      <i class="sep"></i>
      <i class="grip"></i>
      <span class="tb off tb-inner-drop"><svg class="ic"><use href="#pencils"/></svg></span>
      <span class="tb"><svg class="ic"><use href="#pencil"/></svg></span>
      <span class="tb off"><svg class="ic"><use href="#floppyedit"/></svg></span>
      <span class="tb off"><svg class="ic"><use href="#blob"/><use href="#star"/></svg></span>
      <span class="tb off"><svg class="ic"><use href="#tools"/></svg></span><i class="drop"></i>
      <span class="tb off"><svg class="ic"><use href="#tabedit"/></svg></span>
      <span class="tb off"><svg class="ic"><use href="#trash"/></svg></span>
      <span class="tb off"><svg class="ic"><use href="#scissors"/></svg></span>
      <span class="tb off"><svg class="ic"><use href="#copy"/></svg></span>
      <span class="tb off"><svg class="ic"><use href="#paste"/></svg></span>
      <span class="tb off"><svg class="ic"><use href="#undo"/></svg></span>
      <span class="tb off"><svg class="ic"><use href="#redo"/></svg></span>
      <i class="grip grip-tight"></i>
      <span class="tb"><svg class="ic" viewBox="0 0 24 24"><use href="#abc"/><text x="6" y="15.5" class="ic-abc">abc</text></svg></span>
      <span class="tb"><svg class="ic"><use href="#pie"/></svg></span>
      <i class="sep"></i>
      <span class="tb"><svg class="ic" viewBox="0 0 24 24"><use href="#abpin"/><text x="5" y="12" class="ic-abc">ab</text><use href="#pin"/></svg></span>
      <span class="tb"><svg class="ic" viewBox="0 0 24 24"><use href="#abcred"/><text x="6" y="14" class="ic-abc ic-red">abc</text></svg></span>
      <i class="sep sep-thin"></i>
      <span class="tb off"><svg class="ic" viewBox="0 0 24 24"><use href="#abcgray"/><text x="6" y="12" class="ic-abc ic-gray">ab</text><use href="#xbadge"/></svg></span>
      <span class="tb off"><svg class="ic" viewBox="0 0 24 24"><use href="#abcgray"/><text x="6" y="12" class="ic-abc ic-gray">abc</text><use href="#rotbadge"/></svg></span>
      <span class="tb off"><svg class="ic" viewBox="0 0 24 24"><use href="#abcgray"/><text x="6" y="12" class="ic-abc ic-gray">abc</text><use href="#arrbadge"/></svg></span>
      <span class="tb off"><svg class="ic" viewBox="0 0 24 24"><use href="#abcgray"/><text x="6" y="12" class="ic-abc ic-gray">abc</text><use href="#rotbadge"/></svg></span>
      <span class="tb off"><svg class="ic" viewBox="0 0 24 24"><use href="#abcgray"/><text x="6" y="12" class="ic-abc ic-gray">abc</text><use href="#xbadge"/></svg></span>
      <i class="grip"></i>
      <span class="tb"><svg class="ic"><use href="#db"/></svg></span>
      <i class="grip"></i>
      <span class="tb"><svg class="ic"><use href="#globebin"/></svg></span>
      <i class="grip"></i>
      <span class="tb"><svg class="ic"><use href="#python"/></svg></span>
      <span class="tb"><svg class="ic"><use href="#earth"/></svg></span>
      <i class="grip"></i>
      <span class="tb"><svg class="ic" viewBox="0 0 24 24"><use href="#helpbook"/><text x="10" y="17" class="ic-help">?</text></svg></span>
      <i class="grip"></i>
      <span class="tb"><svg class="ic"><use href="#topo"/></svg></span>
      <span class="tb"><svg class="ic"><use href="#tablerefresh"/></svg></span>
    </div>

    <div class="tbar">
      <i class="grip grip-first"></i>
      <span class="tb off"><svg class="ic"><use href="#dotted"/></svg></span>
      <span class="tb off"><svg class="ic"><use href="#triruler"/></svg></span>
      <span class="tb off"><svg class="ic"><use href="#blob"/><use href="#arrbadge"/></svg></span><i class="drop"></i>
      <span class="tb off"><svg class="ic"><use href="#blob"/><use href="#rotbadge"/></svg></span>
      <span class="tb off"><svg class="ic"><use href="#hex"/></svg></span>
      <span class="tb off"><svg class="ic"><use href="#ring"/><use href="#star"/></svg></span>
      <span class="tb off"><svg class="ic"><use href="#two"/><use href="#star"/></svg></span>
      <span class="tb off"><svg class="ic"><use href="#ring"/><use href="#star"/></svg></span>
      <span class="tb off"><svg class="ic"><use href="#ring"/><use href="#xbadge"/></svg></span>
      <span class="tb off"><svg class="ic"><use href="#two"/><use href="#xbadge"/></svg></span>
      <span class="tb off"><svg class="ic"><use href="#reshape"/></svg></span>
      <span class="tb off"><svg class="ic"><use href="#offset"/></svg></span>
      <span class="tb off"><svg class="ic"><use href="#noderot"/><use href="#rotbadge"/></svg></span>
      <span class="tb off"><svg class="ic"><use href="#splitx"/></svg></span>
      <span class="tb off"><svg class="ic"><use href="#scblob"/></svg></span>
      <span class="tb off"><svg class="ic"><use href="#scblob"/></svg></span>
      <span class="tb off"><svg class="ic"><use href="#scblob"/></svg></span>
      <span class="tb off"><svg class="ic"><use href="#lines"/></svg></span>
      <span class="tb off"><svg class="ic"><use href="#triarrow"/></svg></span><i class="drop"></i>
      <i class="grip grip-narrow"></i>
      <span class="tb off"><svg class="ic"><use href="#hist"/></svg></span>
      <i class="spacer"></i>
      <span class="tb off"><svg class="ic"><use href="#histarrow"/></svg></span>
      <span class="tb off"><svg class="ic"><use href="#hist"/></svg></span>
      <span class="tb off"><svg class="ic"><use href="#histarrow"/></svg></span>
      <span class="tb off"><svg class="ic"><use href="#sun"/><use href="#upbadge"/></svg></span>
      <span class="tb off"><svg class="ic"><use href="#sun"/><use href="#downbadge"/></svg></span>
      <span class="tb off"><svg class="ic"><use href="#contrast"/><use href="#upbadge"/></svg></span>
      <span class="tb off"><svg class="ic"><use href="#contrast"/><use href="#downbadge"/></svg></span>
      <span class="tb off"><svg class="ic"><use href="#gamma"/><use href="#upbadge"/></svg></span>
      <span class="tb off"><svg class="ic"><use href="#gamma"/><use href="#downbadge"/></svg></span>
    </div>

    <div class="tbar tbar-short">
      <i class="grip grip-first"></i>
      <span class="tb"><svg class="ic"><use href="#selrect"/></svg></span><i class="drop drop-s"></i>
      <span class="tb"><svg class="ic"><use href="#seltable"/></svg></span><i class="drop drop-s"></i>
      <span class="tb"><svg class="ic"><use href="#desel"/></svg></span><i class="drop drop-s"></i>
      <span class="tb"><svg class="ic"><use href="#selloc"/></svg></span>
      <i class="grip"></i>
      <span class="tb"><svg class="ic"><use href="#greenmag"/></svg></span>
      <span class="tb"><svg class="ic"><use href="#mapedit"/></svg></span>
      <i class="grip"></i>
    </div>

    <div class="main">
      <!-- layer panel -->
      <aside class="panel-left">
        <div class="dock-head">
          <span>Layer</span>
          <span class="dock-btns">
            <svg class="dock-btn"><use href="#float"/></svg>
            <svg class="dock-btn"><use href="#close"/></svg>
          </span>
        </div>
        <div class="layer-tools">
          <svg class="lt" viewBox="0 0 20 20"><path d="M1 13l6-6 6 6-4 4z" fill="#e8b020"/><path d="M1 13l4 4 2 1-6-1z" fill="#d01c1c"/><path d="M9 10l10-9" stroke="#9a6a2c" stroke-width="2.5"/></svg>
          <svg class="lt" viewBox="0 0 20 20"><path d="M2 6h10v11H2z" fill="#f5f5f5" stroke="#666"/><path d="M5 2h5v11H5z" fill="none" stroke="#666"/><rect x="12" y="12" width="7" height="7" fill="#4c9a5c"/><path d="M15.5 13v5M13 15.5h5" stroke="#fff"/></svg>
          <svg class="lt lt-eye" viewBox="0 0 24 20"><path d="M1 9c5-7 15-7 20 0-5 7-15 7-20 0z" fill="#ddd" stroke="#999"/><circle cx="11" cy="9" r="5" fill="#4f7fb0"/><circle cx="11" cy="9" r="2" fill="#123"/><path d="M17 17h6l-3 3z" fill="#333"/></svg>
          <svg class="lt" viewBox="0 0 20 20"><path d="M1 2h18l-7 8v8l-4 1v-9z" fill="#5f8dbd" stroke="#3d6a98"/><path d="M1 2h18l-2 3H3z" fill="#eecb3e"/></svg>
          <svg class="lt" viewBox="0 0 20 20"><text x="1" y="12" class="ic-eps">ε</text><path d="M11 11h7l-1 8h-5z" fill="#aaa"/></svg>
          <i class="drop drop-lt"></i>
          <svg class="lt" viewBox="0 0 20 20"><rect x="1" y="2" width="11" height="15" fill="none" stroke="#888" stroke-dasharray="2 1"/><rect x="4" y="6" width="3" height="3" fill="#e8941c"/><rect x="4" y="12" width="3" height="3" fill="#e8941c"/><path d="M14 1v11h-3.500l5 7 5-7H17V1z" fill="#3e78b4"/></svg>
          <svg class="lt" viewBox="0 0 20 20"><rect x="1" y="2" width="11" height="15" fill="none" stroke="#888" stroke-dasharray="2 1"/><rect x="4" y="6" width="3" height="3" fill="#e8941c"/><rect x="4" y="12" width="3" height="3" fill="#e8941c"/><path d="M14 19V8h-3.500l5-7 5 7H17v11z" fill="#3e78b4"/></svg>
          <svg class="lt" viewBox="0 0 20 20"><rect x="1" y="2" width="14" height="14" fill="#fff" stroke="#777"/><rect x="11" y="12" width="8" height="7" rx="1" fill="#e03c3c"/><path d="M13 15.5h4" stroke="#fff" stroke-width="1.5"/></svg>
        </div>
        <ul class="layers">
          <li class="layer layer-off"><i class="check"></i><i class="sym"><b class="pt pt-rose"></b></i><span>pofw</span></li>
          <li class="layer layer-off"><i class="check"></i><i class="sym"><b class="pt pt-pink"></b></i><span>pois-bereinigt [12138]</span><svg class="mem"><use href="#memchip"/></svg></li>
          <li class="layer layer-off"><i class="check"></i><i class="sym"><b class="pt pt-orange"></b></i><span>pois [12265]</span></li>
          <li class="layer layer-off"><i class="check"></i><i class="sym"><b class="ln ln-a"></b></i><span>waterways</span></li>
          <li class="layer layer-off"><i class="check"></i><i class="sym"><b class="ln ln-b"></b></i><span>roads</span></li>
          <li class="layer layer-sel"><i class="check check-on">✓</i><i class="sym sw sw-khaki"></i><span>Gepuffert</span><svg class="mem"><use href="#memchip"/></svg></li>
          <li class="layer layer-off"><i class="check"></i><i class="sym sw sw-green"></i><span>buildings-bereinigt [154637]</span><svg class="mem"><use href="#memchip"/></svg></li>
          <li class="layer layer-off"><i class="check"></i><i class="sym sw sw-pink"></i><span>buildings [154638]</span></li>
          <li class="layer layer-off"><i class="check"></i><i class="sym sw sw-purple"></i><span>landuse</span></li>
          <li class="layer layer-on"><i class="check check-on">✓</i><i class="sym sw sw-slate"></i><span>Mittelsachsen</span></li>
        </ul>
      </aside>

      <!-- map canvas, drawn in screen coordinates -->
      <div class="map">
        <svg class="map-svg" viewBox="456 208 1488 1202">
          <path class="region" d="M806 477L816 467 820 457 832 446 833 434 837 425 843 420 842 410 852 403 868 407 869 399 873 395 887 393 899 389 911 391 925 393 928 397 926 403 934 403 936 411 941 412 945 417 944 422 955.5 423 968 420 969 407 972 403 982 406 994 400 1002.5 409 1019 407 1015 395 1026 395 1041.5 399 1049 395 1051.5 389 1071 388 1070 384 1080.6 381 1091 384 1095 389 1096 399 1099 403 1097 409 1087.5 411 1093 422 1099 423 1103.6 449 1101 457 1112.4 458 1115 465 1122 468 1126.5 477 1134 475 1137 487 1137 492 1132.7 496 1131.5 503 1139 504 1131 507 1132.7 523 1129.6 538 1121 540 1112.4 538 1111 553 1114 547 1124 547 1125 542 1130 542 1134 552 1136.5 562 1134 568 1132.7 587 1137 597 1134 603 1124 603 1125 615 1133.4 616 1142 621 1135 625 1136.5 635 1120 649 1120 662 1111 669 1116 675 1148.7 645 1165.5 645 1190 638.5 1204 628 1223.7 622 1240.7 621 1251 635 1267 641.5 1283 650 1290 661 1277 679 1271 695 1280 714 1297 713.5 1311 710 1308.7 720 1297 731 1287 731.5 1278 748 1271 762 1292 765 1285 777 1295 789 1295 815 1318.6 830 1324.5 852 1339.5 877 1336 885 1326.5 886.5 1333 900 1344 914.6 1362 912 1372.7 933 1388 936.5 1372 944 1377 947 1367 967 1369 975 1386 988 1403 983 1411.5 996 1421 1021 1439 1033 1448 1042 1439 1046 1426.5 1054 1427 1061.5 1407.5 1068.5 1388 1065 1372 1062 1358 1067 1352 1074 1344 1075 1345 1081 1355 1094 1358.5 1111 1355 1121 1344 1125 1332 1140 1335.6 1145 1342.7 1146 1341 1159.6 1322.5 1165 1314.6 1159.6 1306.7 1152.7 1316 1140 1310.7 1138.5 1308.7 1145 1289 1134.6 1279 1127 1269 1127.7 1264.4 1121 1267 1111 1252.5 1106 1257 1099 1251 1094 1245.4 1099 1237.5 1079 1217.7 1059.6 1219 1032.7 1215.8 1031.5 1223 1032.7 1213.8 1008.5 1200 1009.6 1186 1017 1174 1024 1160 1018.5 1144.6 1025 1135.5 1019 1134.7 1009.6 1141.8 993 1126.8 980.8 1117 977 1111 982.7 1089 970 1077 965 1051.7 965 1050.9 971 1043.7 971 1028 982.7 1022 973 1011 971 1013 959.6 1008 954 995.5 957.7 986.4 965 974.6 955.8 967.8 942 956.8 932.7 960 929 948.9 917 957.5 898 956.8 887.7 943 878.8 935 880.8 923 873 905 873.8 902.6 878 907 861.5 907 855.8 915 844 909 832.7 912 822 895.5 816.5 880.9 824 858 821.7 854 825 835 815 835 806.7 827 803 810 805 794.7 809 779.4 821.7 775.6 833 770 836.7 754.6 848 750.7 841.7 737 846.7 732 841.7 734.7 831.7 726 830 714 818 708.6 810 708.6 798 701 793 689.5 800.7 678 797 669.6 797 655 788 647.4 771.7 630 768 624.4 751.7 615 748 618.7 741.7 613.7 718 611 696.7 622.5 698 630 693 645.5 695 651 688 666.5 691.7 683.8 664 693 670 704.8 675 714 671.7 706.7 665 703 650 688.7 642.7 691.4 635 699 626.7 704 625 703 611.7 706.7 607 695 595 696 585 704 573 704 565 718 556.7 713 550 714 540 719 535 735.4 542.7 745 539 754.6 544 760 540 769 542.7 766.8 550.7 773.7 558 785 556.7 802.4 550.7 823.4 556.7 824 559 838.8 550.7 836.8 543 843.4 536 833 520 841.8 510 835 500 838 497 829 493 821.5 487 811 486.7z"/>
          <g class="dots">
            <circle cx="657.7" cy="739.3" r="6"/>
            <circle cx="729.3" cy="747" r="6"/>
            <circle cx="758.4" cy="780.7" r="6"/>
            <circle cx="763.4" cy="777.3" r="6"/>
            <circle cx="790" cy="781" r="6"/>
            <circle cx="849" cy="805.7" r="6"/>
            <circle cx="897" cy="762" r="6"/>
            <circle cx="921" cy="799.7" r="6"/>
            <circle cx="928.7" cy="830.3" r="6"/>
            <circle cx="974.6" cy="864.3" r="6"/>
            <circle cx="1021" cy="722" r="6"/>
            <circle cx="934.4" cy="729" r="6"/>
            <circle cx="903.8" cy="695.7" r="6"/>
            <circle cx="906.5" cy="700.7" r="6"/>
            <circle cx="1194.4" cy="799" r="6"/>
            <circle cx="1201" cy="791" r="6"/>
            <circle cx="1204.7" cy="792.3" r="6"/>
            <circle cx="1211.4" cy="806.5" r="6"/>
            <circle cx="1181" cy="867.7" r="6"/>
            <circle cx="1247.4" cy="894.6" r="6"/>
            <circle cx="1152.5" cy="939" r="6"/>
            <circle cx="1100.7" cy="965" r="6"/>
          </g>
        </svg>
      </div>

      <!-- results viewer -->
      <aside class="panel-right">
        <div class="dock-head dock-head-r">
          <span>Ergebnisanzeige</span>
          <span class="dock-btns">
            <svg class="dock-btn"><use href="#float"/></svg>
            <svg class="dock-btn"><use href="#close"/></svg>
          </span>
        </div>
        <div class="results">
          <div class="result-row">
            <svg class="result-ic" viewBox="0 0 16 16"><rect x="1" y="1" width="11" height="4" fill="#8fb89a" stroke="#6a8a74" stroke-width=".5"/><rect x="2" y="6" width="11" height="4" fill="#7ea3c9" stroke="#5a7da0" stroke-width=".5"/><rect x="3" y="11" width="11" height="4" fill="#dfe8f2" stroke="#9ab" stroke-width=".5"/></svg>
            <span>listuniquevalues [summary] [12:59:32PM]</span>
          </div>
        </div>
        <div class="splitter"></div>
        <div class="details">
          <b>Algorithm:</b> listuniquevalues [summary]<br>
          <b>File path:</b> <a href="#">/private/var/folders/w9/9kkkd4192sb_z2qn67mhmshm0000gn/ T/processing_eiJPoH/<br>603b85a44938c2.html</a>
        </div>
      </aside>
    </div>

    <!-- status bar -->
    <footer class="status">
      <div class="locator">
        <svg class="loc-ic" viewBox="0 0 14 14"><circle cx="6" cy="6" r="4.5" fill="none" stroke="#999" stroke-width="1.2"/><path d="M9.5 9.5l3.5 3.5" stroke="#999" stroke-width="1.2"/></svg>
        <span>Zu suchender Typ (⌘K)</span>
      </div>
      <span class="status-msg">Kein Objekt an dieser Position gefunden.</span>
      <div class="status-right">
        <span>Koordinate</span>
        <span class="field field-coord">393216,5692059</span>
        <svg class="st-ic st-crs" viewBox="0 0 16 16"><path d="M3 2l10 12M13 2L3 14" stroke="#333" stroke-width="1.5"/><circle cx="8" cy="8" r="4.5" fill="none" stroke="#333"/><path d="M4 5c3 1 5 1 8 0M4 11c3-1 5-1 8 0" fill="none" stroke="#333"/></svg>
        <span>Maßstab</span>
        <span class="field field-scale">1:244006<i class="combo-arrow"></i></span>
        <svg class="st-ic st-lock" viewBox="0 0 14 18"><path d="M3.5 8V5a3.5 3.5 0 0 1 7 0v3" fill="none" stroke="#666" stroke-width="1.5"/><rect x="1.5" y="8" width="11" height="9" rx="1.5" fill="#666"/></svg>
        <span>Vergrößerung</span>
        <span class="field field-spin field-mag">100%<i class="spin"></i></span>
        <span class="st-rot">Drehung</span>
        <span class="field field-spin field-rot">0,0 °<i class="spin"></i></span>
        <span class="check check-status">✓</span>
        <span>Zeichnen</span>
        <svg class="st-ic st-globe" viewBox="0 0 14 14"><circle cx="7" cy="7" r="6" fill="none" stroke="#666"/><path d="M1 7h12M7 1v12M3 3c3 2 5 2 8 0M3 11c3-2 5-2 8 0M7 1c-4 4-4 8 0 12M7 1c4 4 4 8 0 12" fill="none" stroke="#666" stroke-width=".7"/></svg>
        <span class="st-epsg">EPSG:25833</span>
        <svg class="st-ic st-msg" viewBox="0 0 16 18"><path d="M8 1c4 0 7 3 7 7s-3 6-5 7l2 2c-3 0-5-1-6-2-3-1-5-3-5-7s3-7 7-7z" fill="#555"/></svg>
      </div>
    </footer>
  </div>

</body>
</html>
```

FILE: styles.css
```css
* {
  box-sizing: border-box;
  margin: 0;
  padding: 0;
}

body {
  width: 2560px;
  height: 1440px;
  display: flex;
  flex-direction: column;
  overflow: hidden;
  background: #b9855a;
  font-family: Roboto, "Liberation Sans", sans-serif;
  font-size: 12px;
  color: #222;
}

.defs {
  position: absolute;
  width: 0;
  height: 0;
}

.ic-txt { font: 13px Roboto, sans-serif; fill: #444; }
.ic-i { font: italic bold 15px "Liberation Serif", serif; fill: #fff; }
.ic-t { font: 15px "Liberation Serif", serif; fill: #222; }
.ic-abc { font: bold 8px Roboto, sans-serif; fill: #333; }
.ic-red { fill: #e0201c; }
.ic-gray { fill: #999; }
.ic-help { font: 14px Roboto, sans-serif; fill: #fff; }
.ic-eps { font: 15px "Liberation Serif", serif; fill: #6a2c86; }

/* menu bar */
.menubar {
  height: 25px;
  flex-shrink: 0;
  display: flex;
  align-items: center;
  gap: 20.6px;
  padding-left: 21px;
  background: linear-gradient(90deg, #ffd6b4, #ffd9ba 60%, #ffdcbd);
  border-bottom: 1px solid #94745c;
  font-size: 13.7px;
  color: #2b2418;
}

.apple {
  width: 14px;
  height: 16px;
  margin-right: 2px;
}

.menu-app {
  font-weight: 700;
}

.menu-right {
  margin-left: auto;
  display: flex;
  align-items: center;
  padding-right: 19px;
}

.menu-dot {
  width: 4px;
  height: 4px;
  border-radius: 50%;
  background: #2b2418;
  margin-right: 22px;
}

.switches {
  width: 16px;
  height: 16px;
  margin-right: 16px;
}

.menu-clock {
  font-size: 14px;
}

/* window */
.window {
  flex: 1;
  display: flex;
  flex-direction: column;
  min-height: 0;
  border-radius: 9px;
  overflow: hidden;
  background: #ececec;
}

.titlebar {
  height: 29px;
  flex-shrink: 0;
  display: flex;
  align-items: center;
  justify-content: center;
  position: relative;
  background: #fbf6f2;
  border-bottom: 1px solid #c6c6c6;
}

.lights {
  position: absolute;
  left: 8px;
  top: 8px;
  display: flex;
  gap: 8px;
}

.light {
  width: 12px;
  height: 12px;
  border-radius: 50%;
}

.light-red { background: #fc5753; }
.light-yellow { background: #fdbc40; }
.light-green { background: #33c748; }

.title {
  margin-right: 2px;
  font-size: 14px;
  font-weight: 700;
  letter-spacing: .1px;
  color: #555;
}

/* toolbars */
.tbar {
  height: 39px;
  flex-shrink: 0;
  display: flex;
  align-items: center;
  background: linear-gradient(#f6f6f6, #ebebeb);
  border-bottom: 2px solid #bcbcbc;
}

.tbar-short {
  height: 38px;
}

.tb {
  width: 33px;
  height: 33px;
  flex-shrink: 0;
  display: flex;
  align-items: center;
  justify-content: center;
  position: relative;
}

.ic {
  width: 24px;
  height: 24px;
}

.tb.off .ic {
  opacity: .5;
  filter: grayscale(.85);
}

.tb-active {
  background: #d5d5d5;
  border: 1px solid #a8a8a8;
  border-radius: 3px;
}

.tb-inner-drop::after {
  content: "";
  position: absolute;
  right: 0;
  bottom: 1px;
  border: 3px solid transparent;
  border-top: 4px solid #555;
}

.grip {
  width: 16px;
  height: 24px;
  flex-shrink: 0;
  background-image: radial-gradient(circle, #b4b4b4 .8px, transparent 1px);
  background-size: 3px 3px;
  background-clip: content-box;
  padding: 0 5px;
}

.grip-first {
  width: 12.5px;
  padding: 0 3.5px;
}

.grip-narrow {
  width: 10px;
  padding: 0 2px;
}

.grip-tight {
  width: 13px;
  padding: 0 3.5px;
}

.sep {
  width: 8px;
  height: 26px;
  flex-shrink: 0;
  background: linear-gradient(#bdbdbd, #bdbdbd) center / 1px 100% no-repeat;
}

.sep-thin {
  width: 6px;
}

.spacer {
  width: 4px;
  flex-shrink: 0;
}

.drop {
  width: 13px;
  flex-shrink: 0;
  display: flex;
  justify-content: flex-start;
}

.drop::after {
  content: "";
  border: 3.5px solid transparent;
  border-top: 4px solid #555;
  border-bottom: 0;
}

.drop-s {
  width: 12px;
}

/* main area */
.main {
  flex: 1;
  min-height: 0;
  display: grid;
  grid-template-columns: 450px 1fr 610px;
  column-gap: 6px;
  background: #ececec;
}

.panel-left,
.panel-right {
  display: flex;
  flex-direction: column;
  min-height: 0;
}

.dock-head {
  height: 22px;
  flex-shrink: 0;
  display: flex;
  align-items: center;
  justify-content: space-between;
  padding: 0 2px 0 4px;
  font-size: 12px;
  color: #333;
}

.dock-head-r {
  height: 20px;
  padding: 0 1px 0 4px;
}

.dock-btns {
  display: flex;
  gap: 2px;
}

.dock-btn {
  width: 12px;
  height: 12px;
}

.layer-tools {
  height: 29px;
  flex-shrink: 0;
  display: flex;
  align-items: center;
  gap: 5px;
  padding: 0 0 3px 6px;
}

.lt {
  width: 20px;
  height: 20px;
}

.lt-eye {
  width: 21px;
}

.drop-lt {
  width: 8px;
  margin-left: -1px;
}

/* layer tree */
.layers {
  flex: 1;
  list-style: none;
  background: #fff;
  border: 1px solid #b5b5b5;
  margin-bottom: 1px;
}

.layer {
  height: 18px;
  display: flex;
  align-items: center;
  position: relative;
  padding-left: 23px;
  font-size: 14px;
  font-weight: 700;
  letter-spacing: .4px;
}

.layer-off {
  font-style: italic;
  color: #777;
}

.layer-on {
  color: #1c1c1c;
  letter-spacing: .15px;
}

.layer-sel {
  background: #0f6fe6;
  color: #fff;
  letter-spacing: .15px;
}

.layer-sel span {
  text-decoration: underline;
}

.check {
  width: 14px;
  height: 14px;
  flex-shrink: 0;
  display: flex;
  align-items: center;
  justify-content: center;
  background: #fff;
  border: 1px solid #b4b4b4;
  font-family: "DejaVu Sans", sans-serif;
  font-style: normal;
  font-size: 12px;
  font-weight: 700;
  letter-spacing: 0;
  color: #111;
}

.sym {
  width: 16px;
  height: 16px;
  flex-shrink: 0;
  margin: 0 7px 0 6px;
  display: flex;
  align-items: center;
  justify-content: center;
}

.sw { border: 1px solid #555; }
.sw-khaki { background: #cbbd78; }
.sw-green { background: #6c9a6c; }
.sw-pink { background: #f4a6b4; }
.sw-purple { background: #8b5596; }
.sw-slate { background: #7c8a8e; }

.pt {
  width: 6px;
  height: 6px;
  border-radius: 50%;
  border: 1px solid #555;
}

.pt-rose { background: #b8475f; }
.pt-pink { background: #e88a9a; }
.pt-orange { background: #e8901c; }

.ln {
  width: 16px;
  height: 1.5px;
}

.ln-a { background: #eab8b8; }
.ln-b { background: #f4c8ba; }

.mem {
  position: absolute;
  right: 4px;
  top: 1px;
  width: 16px;
  height: 16px;
  background: #fff;
  border-radius: 2px;
  outline: 1px solid #e4e4e4;
}

/* map */
.map {
  background: #fff;
  border: 1px solid #b5b5b5;
  margin-bottom: 1px;
  min-width: 0;
}

.map-svg {
  display: block;
  width: 1488px;
  height: 1202px;
  margin: -1px;
}

.region {
  fill: #7c8a8e;
  stroke: #5c686c;
  stroke-width: 1;
  stroke-linejoin: round;
}

.dots circle {
  fill: #d8b435;
  stroke: #5f5c38;
  stroke-width: 1;
}

/* results */
.results {
  height: 588px;
  flex-shrink: 0;
  background: #fff;
  border: 1px solid #b5b5b5;
}

.result-row {
  height: 19px;
  display: flex;
  align-items: center;
  gap: 7px;
  padding-left: 3px;
  background: #d8d8d8;
  font-size: 13.5px;
  color: #222;
}

.result-ic {
  width: 16px;
  height: 16px;
}

.splitter {
  height: 6px;
  flex-shrink: 0;
  background: radial-gradient(circle, #aaa .7px, transparent 1px) center / 3px 6px repeat-x;
}

.details {
  flex: 1;
  background: #fff;
  border: 1px solid #b5b5b5;
  margin-bottom: 1px;
  padding: 4px 4px;
  font-size: 13.4px;
  line-height: 16px;
  color: #111;
}

.details b {
  letter-spacing: .2px;
}

.details a {
  color: #1a73e8;
}

/* status bar */
.status {
  height: 30px;
  flex-shrink: 0;
  display: flex;
  align-items: center;
  padding-left: 4px;
  background: #ececec;
  font-size: 12px;
}

.locator {
  width: 254px;
  height: 23px;
  display: flex;
  align-items: center;
  gap: 7px;
  padding-left: 8px;
  background: #fff;
  border: 1px solid #c4c4c4;
  border-radius: 4px;
  font-size: 13.5px;
  color: #8a8a8a;
}

.loc-ic {
  width: 14px;
  height: 14px;
}

.status-msg {
  margin-left: 9px;
}

.status-right {
  margin-left: auto;
  display: flex;
  align-items: center;
  height: 100%;
  padding-right: 5px;
}

.field {
  height: 23px;
  display: flex;
  align-items: center;
  position: relative;
  margin-left: 2px;
  padding-left: 4px;
  background: #fff;
  border: 1px solid #bdbdbd;
  border-radius: 2px;
}

.field-coord {
  width: 111px;
  padding-left: 9px;
}

.field-scale {
  width: 93px;
  padding-left: 3px;
}

.field-mag {
  width: 92px;
}

.field-rot {
  width: 92px;
  margin-left: 9px;
}

.combo-arrow {
  position: absolute;
  right: 8px;
  top: 8px;
  border: 4px solid transparent;
  border-top: 5px solid #666;
  border-bottom: 0;
}

.combo-arrow::before {
  content: "";
  position: absolute;
  left: -12px;
  top: -13px;
  height: 21px;
  border-left: 1px solid #d4d4d4;
}

.spin {
  position: absolute;
  right: 0;
  top: 0;
  bottom: 0;
  width: 14px;
  border-left: 1px solid #d4d4d4;
  background:
    linear-gradient(45deg, transparent 50%, #666 50%) 3px 5px / 4px 4px no-repeat,
    linear-gradient(-45deg, transparent 50%, #666 50%) 7px 5px / 4px 4px no-repeat,
    linear-gradient(135deg, transparent 50%, #666 50%) 3px 12px / 4px 4px no-repeat,
    linear-gradient(-135deg, transparent 50%, #666 50%) 7px 12px / 4px 4px no-repeat;
}

.st-ic {
  flex-shrink: 0;
}

.st-crs {
  width: 16px;
  height: 16px;
  margin: 0 14px 0 4px;
}

.st-lock {
  width: 14px;
  height: 18px;
  margin: 0 9px 0 11px;
}

.st-rot {
  margin-left: 8px;
}

.check-status {
  margin: 0 7px 0 7px;
}

.st-globe {
  width: 14px;
  height: 14px;
  margin: 0 3px 0 16px;
}

.st-epsg {
  margin-right: 26px;
}

.st-msg {
  width: 16px;
  height: 18px;
}
```
